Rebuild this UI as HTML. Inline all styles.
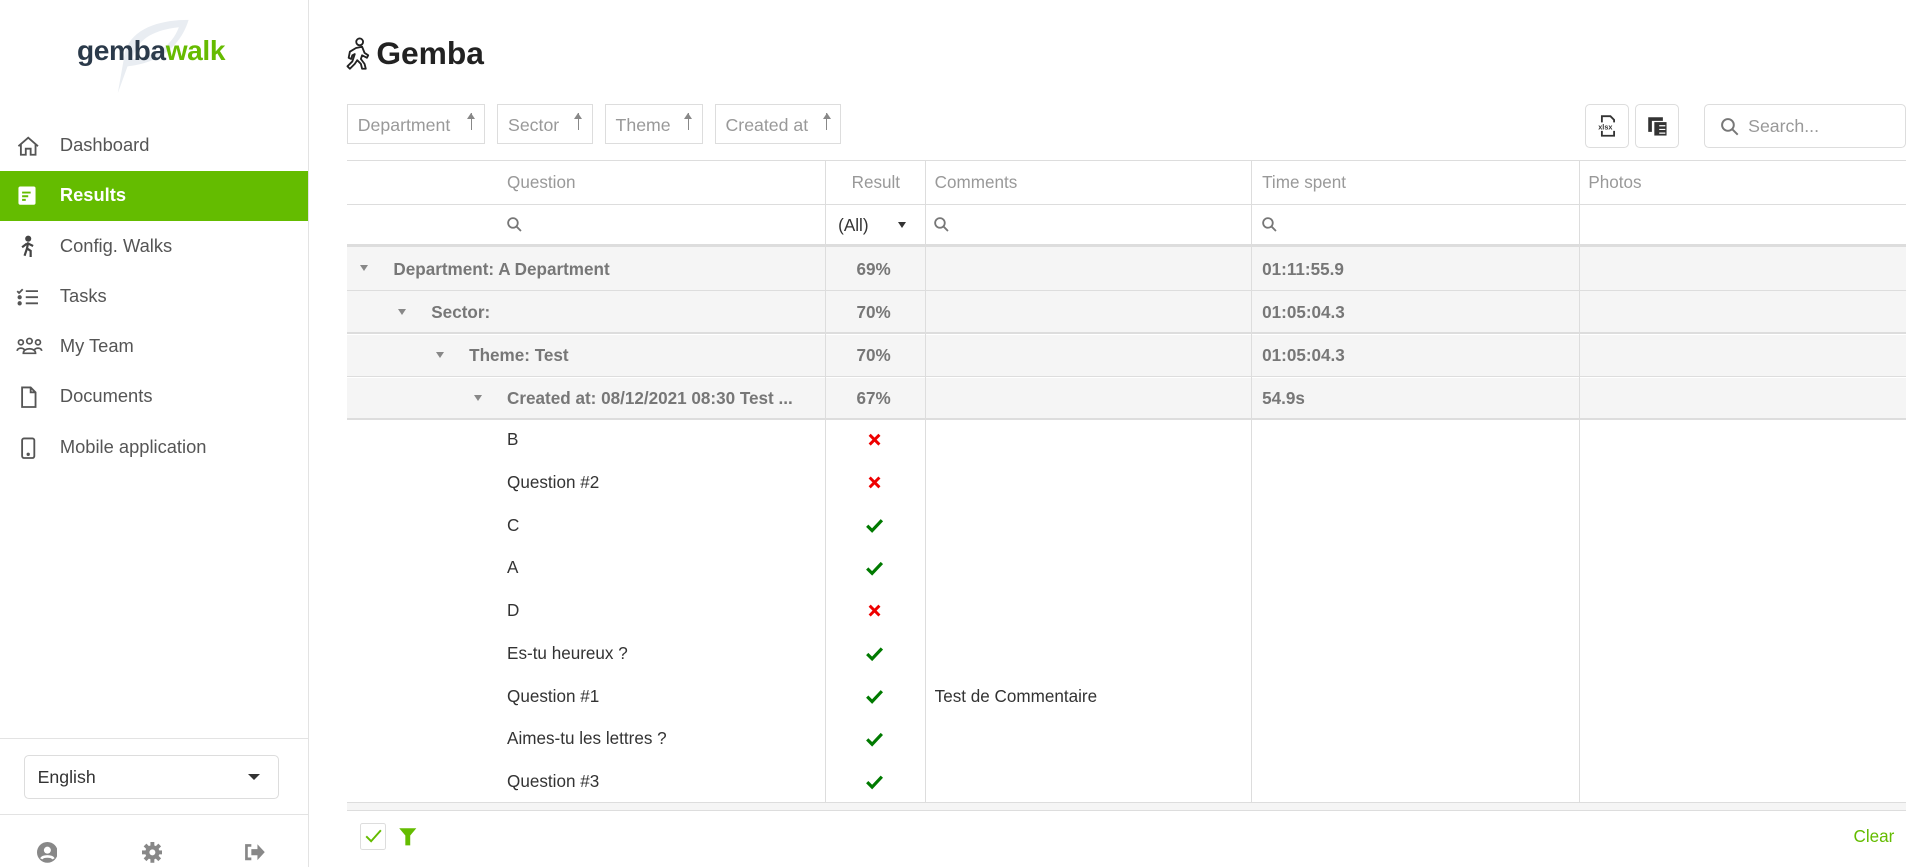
<!DOCTYPE html>
<html><head><meta charset="utf-8"><style>
html{zoom:1.2218}
body{margin:0;width:1560px;height:710px;overflow:hidden;background:#fff;font-family:"Liberation Sans",Arial,sans-serif;position:relative}
.a{position:absolute}
.nav{position:absolute;left:0;width:252px;height:41px;font-size:15px;color:#555}
.nav span{position:absolute;left:49px;top:11px}
.nav svg{position:absolute;left:13px;top:11px}
.btn{position:absolute;top:85px;height:33px;border:1px solid #ddd;font-size:14.5px;color:#999;box-sizing:border-box;padding:8px 0 0 8px}
.btn i{position:absolute;right:10px;top:7px;width:1px;height:14px;background:#888}
.btn i:before{content:"";position:absolute;left:-3px;top:0;border:3.5px solid transparent;border-bottom:5px solid #888;border-top:0}
.h{position:absolute;font-size:14px;color:#999}
.g{position:absolute;left:284px;width:1276px;background:#f5f5f5;border-bottom:1px solid #ddd}
.gt{position:absolute;font-size:14px;font-weight:bold;color:#777}
.tri{position:absolute;width:0;height:0;border:4px solid transparent;border-top:5px solid #888;border-bottom:0}
.q{position:absolute;left:415px;font-size:14px;color:#333}
.vl{position:absolute;width:1px;background:#ddd}
</style></head><body>
<!-- sidebar -->
<div class="a" style="left:252px;top:0;width:1px;height:710px;background:#e3e3e3"></div>
<svg class="a" style="left:88px;top:12px" width="72" height="66"><path d="M66 4 C44 4 20 10 14 30 L8 64 L16 42 C36 40 58 30 66 4Z M58 10 C52 26 38 34 20 36 C24 18 40 12 58 10Z" fill="#e9edf2" fill-rule="evenodd"/></svg>
<div class="a" style="left:63px;top:29px;font-size:23px;font-weight:bold;letter-spacing:-0.3px"><span style="color:#2b3a4a">gemba</span><span style="color:#66bb00">walk</span></div>
<div class="nav" style="top:99px"><svg width="20" height="20" viewBox="0 0 20 20" fill="none" stroke="#555" stroke-width="1.5"><path d="M2 10 L10 3 L18 10 M4 8 V17 H8 V12 H12 V17 H16 V8"/></svg><span>Dashboard</span></div>
<div class="nav" style="top:140px;background:#64bc00;color:#fff;font-weight:bold"><svg width="20" height="20" viewBox="0 0 20 20"><rect x="2" y="2" width="14" height="15" rx="1.5" fill="#fff"/><path d="M5 7h7M5 10h5M5 13h3" stroke="#64bc00" stroke-width="1.6"/></svg><span>Results</span></div>
<div class="nav" style="top:181px"><svg width="20" height="20" viewBox="0 0 20 20" fill="none" stroke="#444" stroke-width="1.8"><circle cx="10" cy="3" r="1.6" fill="#444"/><path d="M10 6 L9 11 L12 13 L12 18 M9 11 L7 17 M9 7 L5 10 M10 7 L14 9"/></svg><span>Config. Walks</span></div>
<div class="nav" style="top:222px"><svg width="20" height="20" viewBox="0 0 20 20" fill="none" stroke="#555" stroke-width="1.5"><path d="M1 5l1.5 1.5 3-3M8 5h10M8 10h10M8 15h10"/><circle cx="3" cy="10" r="1" fill="#555"/><circle cx="3" cy="15" r="1" fill="#555"/></svg><span>Tasks</span></div>
<div class="nav" style="top:263px"><svg width="22" height="20" viewBox="0 0 22 20" fill="none" stroke="#555" stroke-width="1.4"><circle cx="4" cy="6" r="2"/><circle cx="11" cy="5" r="2.2"/><circle cx="18" cy="6" r="2"/><path d="M1 13c0-3 6-3 6 0M6 15c0-5 10-5 10 0zM15 13c0-3 6-3 6 0"/></svg><span>My Team</span></div>
<div class="nav" style="top:304px"><svg width="20" height="20" viewBox="0 0 20 20" fill="none" stroke="#555" stroke-width="1.5"><path d="M5 2h7l4 4v12H5z M12 2v4h4"/></svg><span>Documents</span></div>
<div class="nav" style="top:346px"><svg width="20" height="20" viewBox="0 0 20 20" fill="none" stroke="#555" stroke-width="1.5"><rect x="5" y="2" width="10" height="16" rx="1.5"/><circle cx="10" cy="15" r=".6" fill="#555"/></svg><span>Mobile application</span></div>
<div class="a" style="left:0;top:604px;width:252px;height:1px;background:#e3e3e3"></div>
<div class="a" style="left:20px;top:618px;width:208px;height:36px;border:1px solid #ddd;border-radius:4px;box-sizing:border-box"><span class="a" style="left:10px;top:9px;font-size:14.5px;color:#333">English</span><span class="a" style="right:14px;top:15px;border:5px solid transparent;border-top:5px solid #333;border-bottom:0"></span></div>
<div class="a" style="left:0;top:666px;width:252px;height:1px;background:#e3e3e3"></div>
<svg class="a" style="left:30px;top:689px" width="17" height="17" viewBox="0 0 16 16"><circle cx="8" cy="8" r="8" fill="#888"/><circle cx="8" cy="6.3" r="2.7" fill="#fff"/><path d="M3.3 13c1.2-2.5 8.2-2.5 9.4 0" stroke="#fff" stroke-width="2" fill="none"/></svg>
<svg class="a" style="left:116px;top:689px" width="17" height="17" viewBox="0 0 16 16"><g fill="#888"><circle cx="8" cy="8" r="5.5"/><rect x="6.5" y="0" width="3" height="16"/><rect x="0" y="6.5" width="16" height="3"/><rect x="6.5" y="0" width="3" height="16" transform="rotate(45 8 8)"/><rect x="6.5" y="0" width="3" height="16" transform="rotate(-45 8 8)"/></g><circle cx="8" cy="8" r="2.3" fill="#fff"/></svg>
<svg class="a" style="left:200px;top:690px" width="18" height="15" viewBox="0 0 18 15"><path d="M6 2H2v11h4" stroke="#888" stroke-width="2.2" fill="none"/><path d="M6 5h5V1l6 6.5-6 6.5V10H6z" fill="#888"/></svg>
<!-- main -->
<svg class="a" style="left:282px;top:30px" width="22" height="28" viewBox="0 0 22 28" fill="none" stroke="#222" stroke-width="1.5" stroke-linejoin="round"><circle cx="12" cy="4" r="2.8"/><path d="M9 9 L14 8 L16 13 L19 15 L18 17 L14 15 L13 18 L16 22 L17 26 L14 26 L13 22 L10 19 L8 22 L4 26 L2 24 L6 20 L8 14 L6 15 L5 18 L3 17 L4 12 Z"/></svg>
<div class="a" style="left:308px;top:29px;font-size:26px;font-weight:bold;color:#222">Gemba</div>
<div class="btn" style="left:284px;width:113px">Department<i></i></div>
<div class="btn" style="left:407px;width:78px">Sector<i></i></div>
<div class="btn" style="left:495px;width:80px">Theme<i></i></div>
<div class="btn" style="left:585px;width:103px">Created at<i></i></div>
<div class="a" style="left:1297px;top:85px;width:36px;height:36px;border:1px solid #ddd;border-radius:4px;box-sizing:border-box"><svg class="a" style="left:9px;top:8px" width="18" height="18" viewBox="0 0 18 18" fill="none" stroke="#333" stroke-width="1.5"><path d="M4 6V1h7l3 3v2M4 13v4h10v-4"/><text x="1" y="12" font-size="6" font-family="Liberation Sans" fill="#333" stroke="none" font-weight="bold">xlsx</text></svg></div>
<div class="a" style="left:1338px;top:85px;width:36px;height:36px;border:1px solid #ddd;border-radius:4px;box-sizing:border-box"><svg class="a" style="left:9px;top:9px" width="18" height="18" viewBox="0 0 18 18"><path d="M1 1h12v3H4v9H1z" fill="#333"/><rect x="6" y="5" width="10" height="11" fill="#333"/><path d="M10 8h5M10 11h5M10 14h5" stroke="#fff" stroke-width="1"/></svg></div>
<div class="a" style="left:1395px;top:85px;width:165px;height:36px;border:1px solid #ddd;border-radius:4px;box-sizing:border-box"><svg class="a" style="left:12px;top:10px" width="16" height="16" viewBox="0 0 16 16" fill="none" stroke="#777" stroke-width="1.6"><circle cx="6.5" cy="6.5" r="4.8"/><path d="M10 10l4.5 4.5"/></svg><span class="a" style="left:35px;top:9px;font-size:14.5px;color:#999">Search...</span></div>
<!-- table -->
<div class="a" style="left:284px;top:131px;width:1276px;height:1px;background:#ddd"></div>
<div class="a" style="left:284px;top:167px;width:1276px;height:1px;background:#ddd"></div>
<div class="h" style="left:415px;top:142px">Question</div>
<div class="h" style="left:697px;top:142px">Result</div>
<div class="h" style="left:765px;top:142px">Comments</div>
<div class="h" style="left:1033px;top:142px">Time spent</div>
<div class="h" style="left:1300px;top:142px">Photos</div>
<svg class="a" style="left:414px;top:177px" width="14" height="14" viewBox="0 0 16 16" fill="none" stroke="#777" stroke-width="1.7"><circle cx="6.5" cy="6.5" r="4.5"/><path d="M10 10l4 4"/></svg>
<svg class="a" style="left:764px;top:177px" width="14" height="14" viewBox="0 0 16 16" fill="none" stroke="#777" stroke-width="1.7"><circle cx="6.5" cy="6.5" r="4.5"/><path d="M10 10l4 4"/></svg>
<svg class="a" style="left:1032px;top:177px" width="14" height="14" viewBox="0 0 16 16" fill="none" stroke="#777" stroke-width="1.7"><circle cx="6.5" cy="6.5" r="4.5"/><path d="M10 10l4 4"/></svg>
<div class="a" style="left:686px;top:177px;font-size:14px;color:#333">(All)</div>
<div class="a" style="left:735px;top:182px;border:4px solid transparent;border-top:5px solid #333;border-bottom:0"></div>
<div class="a" style="left:284px;top:200px;width:1276px;height:2px;background:#ddd"></div>
<div class="g" style="top:202px;height:35px"></div>
<div class="g" style="top:238px;height:34px;border-bottom:2px solid #ddd"></div>
<div class="g" style="top:274px;height:34px"></div>
<div class="g" style="top:309px;height:33px;border-bottom:2px solid #ddd"></div>
<div class="tri" style="left:295px;top:217px"></div><div class="gt" style="left:322px;top:213px">Department: A Department</div>
<div class="tri" style="left:326px;top:253px"></div><div class="gt" style="left:353px;top:248px">Sector:</div>
<div class="tri" style="left:357px;top:288px"></div><div class="gt" style="left:384px;top:283px">Theme: Test</div>
<div class="tri" style="left:388px;top:323px"></div><div class="gt" style="left:415px;top:318px">Created at: 08/12/2021 08:30 Test ...</div>
<div class="gt" style="left:701px;top:213px">69%</div><div class="gt" style="left:701px;top:248px">70%</div><div class="gt" style="left:701px;top:283px">70%</div><div class="gt" style="left:701px;top:318px">67%</div>
<div class="gt" style="left:1033px;top:213px">01:11:55.9</div><div class="gt" style="left:1033px;top:248px">01:05:04.3</div><div class="gt" style="left:1033px;top:283px">01:05:04.3</div><div class="gt" style="left:1033px;top:318px">54.9s</div>
<div class="vl" style="left:675px;top:131px;height:526px"></div>
<div class="vl" style="left:757px;top:131px;height:526px"></div>
<div class="vl" style="left:1024px;top:131px;height:526px"></div>
<div class="vl" style="left:1292px;top:131px;height:526px"></div>
<div class="q" style="top:352px">B</div>
<div class="q" style="top:387px">Question #2</div>
<div class="q" style="top:422px">C</div>
<div class="q" style="top:457px">A</div>
<div class="q" style="top:492px">D</div>
<div class="q" style="top:527px">Es-tu heureux ?</div>
<div class="q" style="top:562px">Question #1</div>
<div class="q" style="top:597px">Aimes-tu les lettres ?</div>
<div class="q" style="top:632px">Question #3</div>
<div class="a" style="left:765px;top:562px;font-size:14px;color:#333">Test de Commentaire</div>
<svg class="a" style="left:709px;top:353px" width="14" height="300" viewBox="0 0 14 300">
<defs><path id="x" d="M2 2L10 10M10 2L2 10" stroke="#e00" stroke-width="2.4"/><path id="c" d="M1 6.5L5 10.5 13 2" stroke="#007a00" stroke-width="2.6" fill="none"/></defs>
<use href="#x" x="1" y="1"/><use href="#x" x="1" y="36"/><use href="#c" y="71"/><use href="#c" y="106"/><use href="#x" x="1" y="141"/><use href="#c" y="176"/><use href="#c" y="211"/><use href="#c" y="246"/><use href="#c" y="281"/>
</svg>
<div class="a" style="left:284px;top:656px;width:1276px;height:1px;background:#ddd"></div>
<div class="a" style="left:284px;top:657px;width:1276px;height:6px;background:#f5f5f5;border-bottom:1px solid #ddd"></div>
<div class="a" style="left:295px;top:674px;width:21px;height:22px;border:1px solid #ddd;box-sizing:border-box;border-radius:2px"><svg class="a" style="left:3px;top:4px" width="14" height="12" viewBox="0 0 14 12"><path d="M1 6l4 4 8-9" stroke="#64bc00" stroke-width="1.6" fill="none"/></svg></div>
<svg class="a" style="left:326px;top:677px" width="16" height="16" viewBox="0 0 16 16"><path d="M1 1h14L10 7v8H6V7z" fill="#64bc00"/></svg>
<div class="a" style="left:1517px;top:677px;font-size:14px;color:#64bc00">Clear</div>
</body></html>
